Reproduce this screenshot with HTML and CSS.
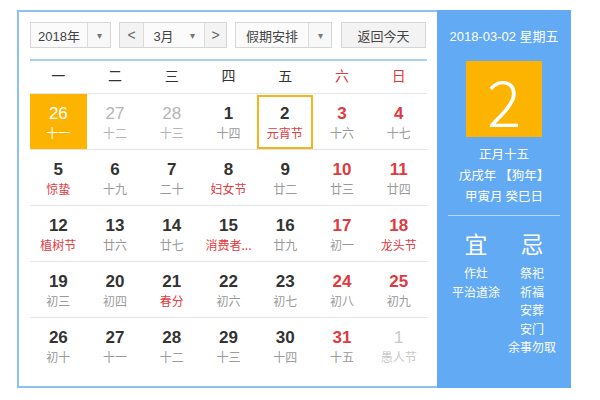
FILE: index.html
```html
<!DOCTYPE html>
<html>
<head>
<meta charset="utf-8">
<link rel="stylesheet" href="styles.css">
</head>
<body>
<div class="cal">
  <div class="main">
    <div class="controls">
      <div class="sel year"><span class="txt">2018年</span><span class="arr">▾</span></div>
      <div class="sel month"><span class="nav">&lt;</span><span class="mid">3月<span class="arr2">▾</span></span><span class="nav r">&gt;</span></div>
      <div class="sel hol"><span class="txt">假期安排</span><span class="arr">▾</span></div>
      <div class="btn">返回今天</div>
    </div>
    <div class="week">
      <span>一</span><span>二</span><span>三</span><span>四</span><span>五</span><span class="we">六</span><span class="we">日</span>
    </div>
    <div class="row">
      <div class="cell today"><b>26</b><i>十一</i></div>
      <div class="cell other"><b>27</b><i>十二</i></div>
      <div class="cell other"><b>28</b><i>十三</i></div>
      <div class="cell"><b>1</b><i>十四</i></div>
      <div class="cell sel-day"><b>2</b><i class="fest">元宵节</i></div>
      <div class="cell we"><b>3</b><i>十六</i></div>
      <div class="cell we"><b>4</b><i>十七</i></div>
    </div>
    <div class="row">
      <div class="cell"><b>5</b><i class="fest">惊蛰</i></div>
      <div class="cell"><b>6</b><i>十九</i></div>
      <div class="cell"><b>7</b><i>二十</i></div>
      <div class="cell"><b>8</b><i class="fest">妇女节</i></div>
      <div class="cell"><b>9</b><i>廿二</i></div>
      <div class="cell we"><b>10</b><i>廿三</i></div>
      <div class="cell we"><b>11</b><i>廿四</i></div>
    </div>
    <div class="row">
      <div class="cell"><b>12</b><i class="fest">植树节</i></div>
      <div class="cell"><b>13</b><i>廿六</i></div>
      <div class="cell"><b>14</b><i>廿七</i></div>
      <div class="cell"><b>15</b><i class="fest">消费者...</i></div>
      <div class="cell"><b>16</b><i>廿九</i></div>
      <div class="cell we"><b>17</b><i>初一</i></div>
      <div class="cell we"><b>18</b><i class="fest">龙头节</i></div>
    </div>
    <div class="row">
      <div class="cell"><b>19</b><i>初三</i></div>
      <div class="cell"><b>20</b><i>初四</i></div>
      <div class="cell"><b>21</b><i class="fest">春分</i></div>
      <div class="cell"><b>22</b><i>初六</i></div>
      <div class="cell"><b>23</b><i>初七</i></div>
      <div class="cell we"><b>24</b><i>初八</i></div>
      <div class="cell we"><b>25</b><i>初九</i></div>
    </div>
    <div class="row last">
      <div class="cell"><b>26</b><i>初十</i></div>
      <div class="cell"><b>27</b><i>十一</i></div>
      <div class="cell"><b>28</b><i>十二</i></div>
      <div class="cell"><b>29</b><i>十三</i></div>
      <div class="cell"><b>30</b><i>十四</i></div>
      <div class="cell we"><b>31</b><i>十五</i></div>
      <div class="cell other light"><b>1</b><i>愚人节</i></div>
    </div>
  </div>
  <div class="side">
    <div class="date">2018-03-02 星期五</div>
    <div class="big">2</div>
    <div class="lunar">
      <div>正月十五</div>
      <div>戊戌年 【狗年】</div>
      <div>甲寅月 癸巳日</div>
    </div>
    <div class="yj">
      <div class="col">
        <div class="h">宜</div>
        <div>作灶</div>
        <div>平治道涂</div>
      </div>
      <div class="col">
        <div class="h">忌</div>
        <div>祭祀</div>
        <div>祈福</div>
        <div>安葬</div>
        <div>安门</div>
        <div>余事勿取</div>
      </div>
    </div>
  </div>
</div>
</body>
</html>
```
FILE: styles.css
```css
* { box-sizing: border-box; }
body {
  margin: 0;
  background: #fff;
  font-family: "Liberation Sans", "Noto Sans CJK SC", sans-serif;
  color: #333;
}
.cal {
  display: flex;
  margin: 10px 0 0 17px;
  width: 554px;
  height: 378px;
}
.main {
  width: 420px;
  height: 378px;
  border: 2px solid #8cc2f3;
  border-right: none;
  padding: 10px 10px 0 11px;
  background: #fff;
}
.controls {
  display: flex;
  gap: 8px;
  height: 26px;
}
.sel, .btn {
  display: flex;
  height: 26px;
  border: 1px solid #d6d6d6;
  background: #f8f8f8;
  font-size: 13px;
  color: #444;
  align-items: stretch;
}
.sel span { display: flex; align-items: center; justify-content: center; }
.year { width: 81px; }
.year .txt { width: 57px; border-right: 1px solid #dcdcdc; background: #fbfbfb; }
.arr { flex: 1; font-size: 10px; color: #777; }
.month { width: 108px; }
.month .nav { width: 24px; border-right: 1px solid #dcdcdc; color: #666; font-size: 14px; background: #f3f3f3; }
.month .nav.r { width: 22px; border-right: none; border-left: 1px solid #dcdcdc; }
.month .mid { flex: 1; background: #fbfbfb; gap: 16px; }
.arr2 { font-size: 10px; color: #777; }
.hol { width: 97px; }
.hol .txt { width: 73px; border-right: 1px solid #dcdcdc; background: #fbfbfb; }
.btn {
  width: 85px;
  margin-left: 1px;
  align-items: center;
  justify-content: center;
  background: #f3f3f3;
}
.week {
  margin-top: 11px;
  border-top: 2px solid #a9d1f6;
  display: grid;
  grid-template-columns: repeat(7, 1fr);
  height: 35px;
  padding-bottom: 4px;
  border-bottom: 1px solid #e6e6e6;
  width: 397px;
}
.week span {
  display: flex;
  align-items: center;
  justify-content: center;
  font-size: 14px;
  color: #333;
  font-family: "Noto Sans CJK SC", sans-serif;
}
.week .we { color: #e0393e; }
.row {
  display: grid;
  grid-template-columns: repeat(7, 1fr);
  height: 56px;
  border-bottom: 1px solid #e3e3e3;
  width: 397px;
}
.row.last { border-bottom: none; }
.cell {
  display: flex;
  flex-direction: column;
  align-items: center;
  justify-content: center;
  padding-top: 2px;
}
.cell b {
  font-size: 17px;
  font-weight: bold;
  color: #333;
  line-height: 20px;
}
.cell i {
  font-style: normal;
  font-size: 12px;
  color: #9a9a9a;
  line-height: 18px;
  font-family: "Noto Sans CJK SC", sans-serif;
  white-space: nowrap;
}
.cell i.fest { color: #e33a3f; }
.cell.we b { color: #e0393e; }
.cell.other b { color: #b5b5b5; font-weight: normal; }
.cell.other i { color: #b5b5b5; }
.cell.light b, .cell.light i { color: #c8c8c8; }
.cell.today { background: #fcb400; }
.cell.today b { color: #fff; font-weight: normal; }
.cell.today i { color: #fff; }
.cell.sel-day { border: 2px solid #f8b31a; margin: 1px 1px 0 0; }
.side {
  width: 134px;
  height: 378px;
  background: #62aaf3;
  color: #fff;
  display: flex;
  flex-direction: column;
  align-items: center;
  font-family: "Noto Sans CJK SC", sans-serif;
}
.date {
  margin-top: 18px;
  font-size: 13px;
  line-height: 18px;
  font-family: "Liberation Sans", "Noto Sans CJK SC", sans-serif;
}
.big {
  margin-top: 15px;
  width: 76px;
  height: 76px;
  background: #fcb400;
  display: flex;
  align-items: center;
  justify-content: center;
  font-size: 64px;
  font-weight: 300;
  line-height: 1;
}
.lunar {
  margin-top: 6px;
  font-size: 12.5px;
  line-height: 21px;
  text-align: center;
  width: 112px;
  padding-bottom: 9px;
  border-bottom: 1px solid rgba(255,255,255,0.55);
}
.yj {
  display: grid;
  grid-template-columns: 56px 56px;
  width: 112px;
  margin-top: 12px;
}
.col {
  display: flex;
  flex-direction: column;
  align-items: center;
  font-size: 12px;
  line-height: 18.5px;
  white-space: nowrap;
}
.col .h {
  font-size: 23px;
  line-height: 30px;
  margin-bottom: 6px;
}
```
